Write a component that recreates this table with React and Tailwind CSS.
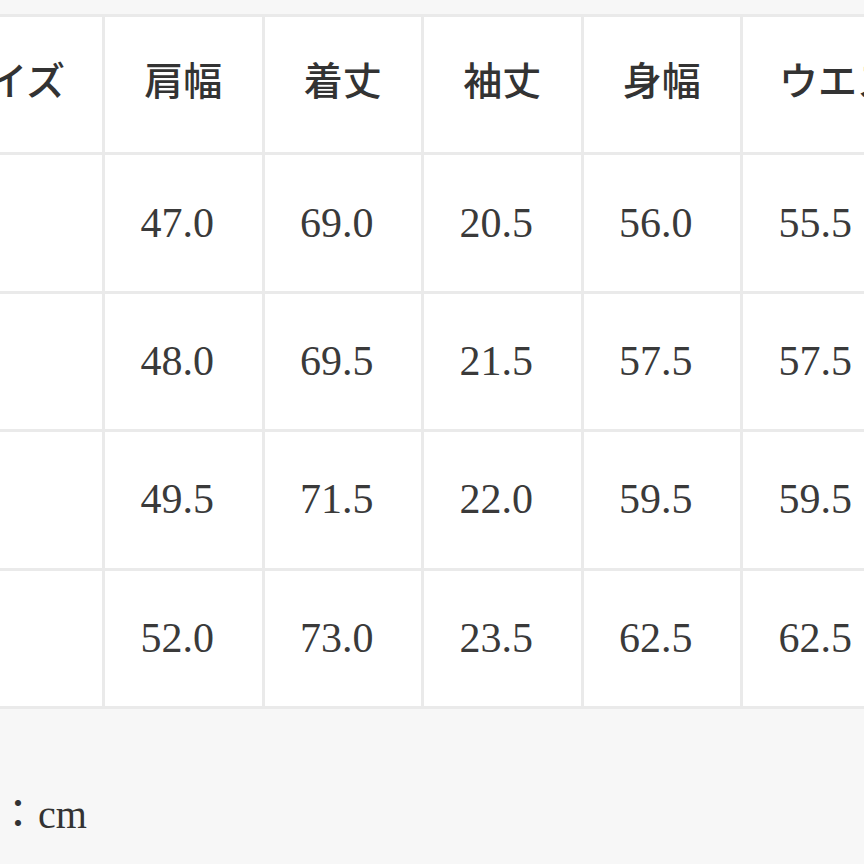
const headers = ["サイズ", "肩幅", "着丈", "袖丈", "身幅", "ウエスト"];

const rows = [
  ["S", "47.0", "69.0", "20.5", "56.0", "55.5"],
  ["M", "48.0", "69.5", "21.5", "57.5", "57.5"],
  ["L", "49.5", "71.5", "22.0", "59.5", "59.5"],
  ["XL", "52.0", "73.0", "23.5", "62.5", "62.5"],
];

export default function App() {
  return (
    <div className="w-[864px] h-[864px] overflow-hidden bg-[#f7f7f7] text-[#333] font-['Liberation_Serif','Noto_Sans_CJK_JP',serif]">
      <div className="pt-[14px] ml-[-57.5px] w-max">
        <div className="grid grid-cols-[repeat(6,156.5px)] auto-rows-[135.4px] gap-[3px] p-[3px] bg-[#eaeaea]">
          {headers.map((h, i) => (
            <div
              key={h}
              className={
                "bg-white flex items-center pb-[4px] text-[39px] font-medium whitespace-nowrap overflow-hidden " +
                (i === 0 ? "justify-end pr-[37px]" : i === 5 ? "justify-start pl-[36px]" : "justify-center")
              }
            >
              {h}
            </div>
          ))}
          {rows.map((r) =>
            r.map((v, i) => (
              <div
                key={r[0] + i}
                className="bg-white flex items-center justify-center pr-[12px] text-[42px] text-[#3a3a3a]"
              >
                {i === 0 ? "" : v}
              </div>
            ))
          )}
        </div>
      </div>
      <div className="mt-[86px] ml-[-82px] text-[40px] leading-none text-[#333]">単位：cm</div>
    </div>
  );
}
